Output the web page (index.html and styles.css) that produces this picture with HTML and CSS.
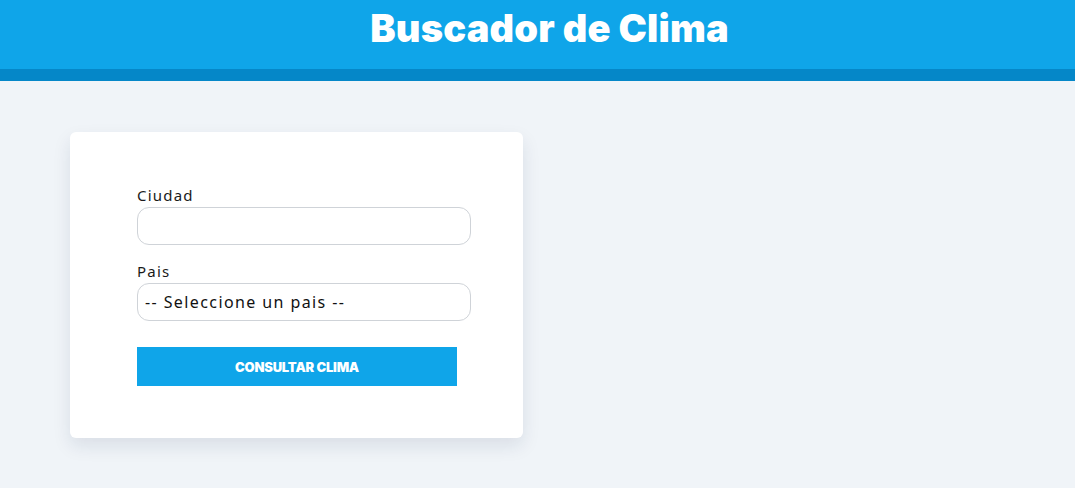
FILE: index.html
```html
<!DOCTYPE html>
<html lang="es">
<head>
<meta charset="utf-8">
<title>Buscador de Clima</title>
<link rel="stylesheet" href="styles.css">
</head>
<body>
<header class="header">
  <h1 class="title">Buscador de Clima</h1>
</header>
<div class="band"></div>
<main class="main">
  <form class="card">
    <div class="field">
      <label class="label" for="ciudad">Ciudad</label>
      <input class="input" id="ciudad" type="text">
    </div>
    <div class="field">
      <label class="label" for="pais">Pais</label>
      <div class="input select">-- Seleccione un pais --</div>
    </div>
    <button class="button" type="button">Consultar Clima</button>
  </form>
</main>
</body>
</html>
```
FILE: styles.css
```css
* { box-sizing: border-box; }
html, body { margin: 0; padding: 0; }
body {
  background: #f0f4f8;
  font-family: "Noto Sans", "DejaVu Sans", sans-serif;
  color: #111;
  height: 488px;
}
.header {
  background: #0fa5e9;
  height: 69px;
  display: flex;
  justify-content: center;
  padding-left: 24px;
}
.title {
  margin: 0;
  padding-top: 3px;
  font-family: Inter, sans-serif;
  font-weight: 900;
  font-size: 38px;
  line-height: 50px;
  color: #fff;
  letter-spacing: 0.2px;
}
.band {
  height: 12px;
  background: #0587c8;
}
.main {
  padding: 51px 0 0 70px;
}
.card {
  width: 453px;
  background: #fff;
  border-radius: 6px;
  box-shadow: 0 8px 18px rgba(20, 40, 80, 0.10);
  padding: 52px 52px 52px 67px;
  display: flex;
  flex-direction: column;
}
.field {
  display: flex;
  flex-direction: column;
  margin-bottom: 15px;
}
.label {
  font-size: 15px;
  line-height: 23px;
  letter-spacing: 1.2px;
  color: #1a1a1a;
}
.input {
  height: 38px;
  border: 1px solid #cfd3d8;
  border-radius: 12px;
  background: #fff;
  font: inherit;
  width: 334px;
}
.select {
  display: flex;
  align-items: center;
  padding-left: 7px;
  font-size: 16px;
  letter-spacing: 1.4px;
  color: #111;
}
.button {
  margin-top: 11px;
  width: 320px;
  height: 39px;
  border: none;
  background: #0fa5e9;
  color: #fff;
  font-family: Inter, sans-serif;
  font-weight: 900;
  font-size: 13px;
  letter-spacing: -0.2px;
  text-transform: uppercase;
  padding: 0;
}
```
